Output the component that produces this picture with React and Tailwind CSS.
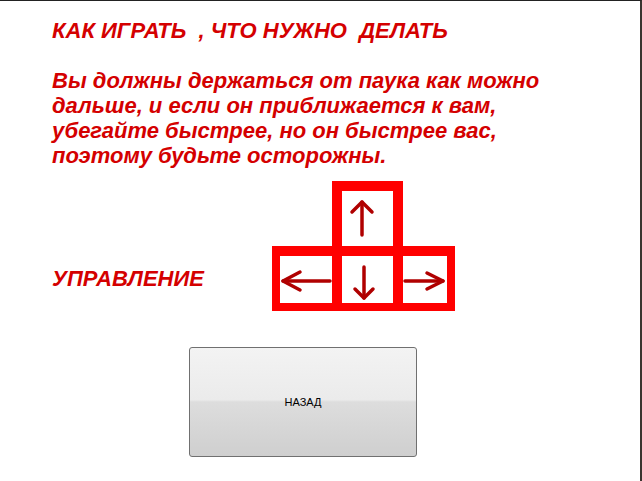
import React from 'react';

// Arrow drawn inside a key cell
const Arrow = ({ w, h, line, head }) => (
  <svg width={w} height={h} viewBox={`0 0 ${w} ${h}`} className="block">
    <g stroke="#b00000" strokeWidth="3.5" strokeLinecap="round" strokeLinejoin="round" fill="none">
      <line x1={line[0]} y1={line[1]} x2={line[2]} y2={line[3]} />
      <polyline points={head} />
    </g>
  </svg>
);

const Keys = () => (
  <div className="flex flex-col">
    {/* up key */}
    <div className="ml-[60px] w-[71px] bg-[#ff0000] pt-[10px] px-[10px]">
      <div className="w-[51px] h-[55px] bg-white">
        <Arrow w={51} h={55} line={[20, 11, 20, 44]} head="10,21 20,11 30,21" />
      </div>
    </div>
    {/* left / down / right */}
    <div className="flex w-[183px] bg-[#ff0000] pt-[10px] pb-[8px] px-[8px] gap-[10px]">
      <div className="w-[52px] h-[47px] bg-white">
        <Arrow w={52} h={47} line={[3, 25, 50, 25]} head="20,16 3,25 20,34" />
      </div>
      <div className="w-[51px] h-[47px] bg-white">
        <Arrow w={51} h={47} line={[22, 11, 22, 42]} head="13,33 22,42 31,33" />
      </div>
      <div className="w-[44px] h-[47px] bg-white">
        <Arrow w={44} h={47} line={[2, 25, 40, 25]} head="24,17 40,25 24,33" />
      </div>
    </div>
  </div>
);

export default function App() {
  return (
    <div className="w-[642px] h-[481px] bg-white border-t border-t-[#222] border-r-2 border-r-[#3a3530] font-['Liberation_Sans',Arial,sans-serif] overflow-hidden">
      <div className="pl-[52px] pt-[18px]">
        <h1 className="text-[22px] leading-[24px] font-bold italic text-[#d40000] whitespace-pre">
          {'КАК ИГРАТЬ  , ЧТО НУЖНО  ДЕЛАТЬ'}
        </h1>
        <p className="mt-[25px] text-[22px] leading-[25px] font-bold italic text-[#d40000]">
          Вы должны держаться от паука как можно
          <br />
          дальше, и если он приближается к вам,
          <br />
          убегайте быстрее, но он быстрее вас,
          <br />
          поэтому будьте осторожны.
        </p>
        <div className="flex items-end mt-[13px]">
          <div className="w-[220px] h-[65px] flex items-center text-[22px] leading-[24px] font-bold italic text-[#d40000]">
            УПРАВЛЕНИЕ
          </div>
          <Keys />
        </div>
      </div>
      <button className="mt-[36px] ml-[189px] w-[228px] h-[110px] rounded-[3px] border border-[#707070] bg-[linear-gradient(to_bottom,#f3f3f3_0%,#ebebeb_48%,#dddddd_50%,#cfcfcf_100%)] text-[11px] text-black">
        НАЗАД
      </button>
    </div>
  );
}
